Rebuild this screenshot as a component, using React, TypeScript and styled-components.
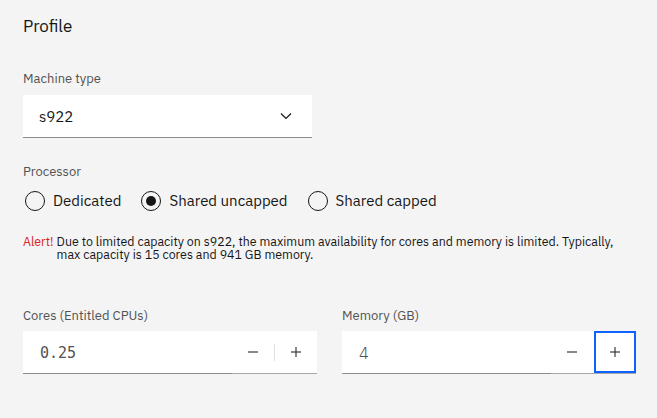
import React from "react";
import styled, { createGlobalStyle, css } from "styled-components";

const GlobalStyle = createGlobalStyle`
  html, body { margin: 0; padding: 0; background: #f4f4f4; }
  body {
    font-family: "IBM Plex Sans", "Noto Sans", sans-serif;
    color: #161616;
    -webkit-font-smoothing: antialiased;
  }
  * { box-sizing: border-box; }
`;

const Page = styled.div`
  width: 657px;
  height: 418px;
  padding: 16px 21px 0 23px;
  display: flex;
  flex-direction: column;
`;

const Title = styled.h2`
  margin: 0;
  font-size: 17px;
  line-height: 20px;
  font-weight: 400;
  color: #161616;
`;

const Label = styled.div<{ $mt?: number; $mb?: number }>`
  font-size: 13px;
  line-height: 16px;
  color: #525252;
  margin-top: ${(p) => p.$mt ?? 0}px;
  margin-bottom: ${(p) => p.$mb ?? 8}px;
`;

const Select = styled.div`
  width: 289px;
  height: 43px;
  background: #ffffff;
  border-bottom: 1px solid #8d8d8d;
  display: flex;
  align-items: center;
  justify-content: space-between;
  padding: 0 20px 0 16px;
  font-size: 15px;
  color: #161616;
`;

const RadioGroup = styled.div`
  display: flex;
  align-items: center;
  gap: 20px;
  height: 20px;
  margin-left: 2px;
`;

const RadioItem = styled.label`
  display: flex;
  align-items: center;
  gap: 8px;
  font-size: 15px;
  line-height: 20px;
  color: #161616;
`;

const RadioCircle = styled.span<{ $checked?: boolean }>`
  width: 20px;
  height: 20px;
  border-radius: 50%;
  border: 1px solid #161616;
  display: flex;
  align-items: center;
  justify-content: center;
  ${(p) =>
    p.$checked &&
    css`
      &::after {
        content: "";
        width: 10px;
        height: 10px;
        border-radius: 50%;
        background: #161616;
      }
    `}
`;

const Alert = styled.div`
  display: flex;
  gap: 3px;
  margin-top: 24px;
  font-size: 12.4px;
  line-height: 13px;
  color: #161616;
`;

const AlertTag = styled.span`
  color: #da1e28;
  flex: none;
`;

const AlertText = styled.span``;

const Row = styled.div`
  display: grid;
  grid-template-columns: 294px 294px;
  column-gap: 25px;
  margin-top: 47px;
`;

const Field = styled.div``;

const NumberBox = styled.div`
  height: 43px;
  display: flex;
  background: #ffffff;
`;

const NumberValue = styled.div<{ $mono?: boolean }>`
  flex: 1;
  display: flex;
  align-items: center;
  padding: 2px 0 0 17px;
  border-bottom: 1px solid #8d8d8d;
  color: #525252;
  ${(p) =>
    p.$mono
      ? css`
          font-family: "DejaVu Sans Mono", "Liberation Mono", monospace;
          font-size: 15px;
          font-weight: 300;
        `
      : css`
          font-size: 16px;
          font-weight: 300;
        `}
`;

const Controls = styled.div`
  display: flex;
  align-items: center;
  border-bottom: 1px solid #a8a8a8;
`;

const StepButton = styled.button<{ $focused?: boolean }>`
  width: 42px;
  height: 100%;
  border: none;
  background: #ffffff;
  padding: 0;
  display: flex;
  align-items: center;
  justify-content: center;
  color: #161616;
  cursor: pointer;
  ${(p) =>
    p.$focused &&
    css`
      box-shadow: inset 0 0 0 2px #0f62fe;
    `}
`;

const Divider = styled.span<{ $hidden?: boolean }>`
  width: 1px;
  height: 17px;
  background: ${(p) => (p.$hidden ? "#ffffff" : "#e0e0e0")};
`;

const Chevron = () => (
  <svg width="12" height="8" viewBox="0 0 12 8" fill="none">
    <path d="M1 1.5 L6 6.5 L11 1.5" stroke="#161616" strokeWidth="1.2" />
  </svg>
);

const Minus = () => (
  <svg width="10" height="10" viewBox="0 0 10 10">
    <rect x="0" y="4.5" width="10" height="1" fill="#161616" />
  </svg>
);

const Plus = () => (
  <svg width="10" height="10" viewBox="0 0 10 10">
    <rect x="0" y="4.5" width="10" height="1" fill="#161616" />
    <rect x="4.5" y="0" width="1" height="10" fill="#161616" />
  </svg>
);

const NumberInput = ({
  value,
  mono,
  focusPlus,
}: {
  value: string;
  mono?: boolean;
  focusPlus?: boolean;
}) => (
  <NumberBox>
    <NumberValue $mono={mono}>{value}</NumberValue>
    <Controls>
      <StepButton aria-label="Decrement">
        <Minus />
      </StepButton>
      <Divider $hidden={focusPlus} />
      <StepButton aria-label="Increment" $focused={focusPlus}>
        <Plus />
      </StepButton>
    </Controls>
  </NumberBox>
);

export default function App() {
  return (
    <>
      <GlobalStyle />
      <Page>
        <Title>Profile</Title>
        <Label $mt={35}>Machine type</Label>
        <Select>
          <span>s922</span>
          <Chevron />
        </Select>
        <Label $mt={26} $mb={11}>Processor</Label>
        <RadioGroup>
          <RadioItem>
            <RadioCircle />
            Dedicated
          </RadioItem>
          <RadioItem>
            <RadioCircle $checked />
            Shared uncapped
          </RadioItem>
          <RadioItem>
            <RadioCircle />
            Shared capped
          </RadioItem>
        </RadioGroup>
        <Alert>
          <AlertTag>Alert!</AlertTag>
          <AlertText>
            Due to limited capacity on s922, the maximum availability for cores and memory is limited. Typically,
            <br />
            max capacity is 15 cores and 941 GB memory.
          </AlertText>
        </Alert>
        <Row>
          <Field>
            <Label $mb={7}>Cores (Entitled CPUs)</Label>
            <NumberInput value="0.25" mono />
          </Field>
          <Field>
            <Label $mb={7}>Memory (GB)</Label>
            <NumberInput value="4" focusPlus />
          </Field>
        </Row>
      </Page>
    </>
  );
}
